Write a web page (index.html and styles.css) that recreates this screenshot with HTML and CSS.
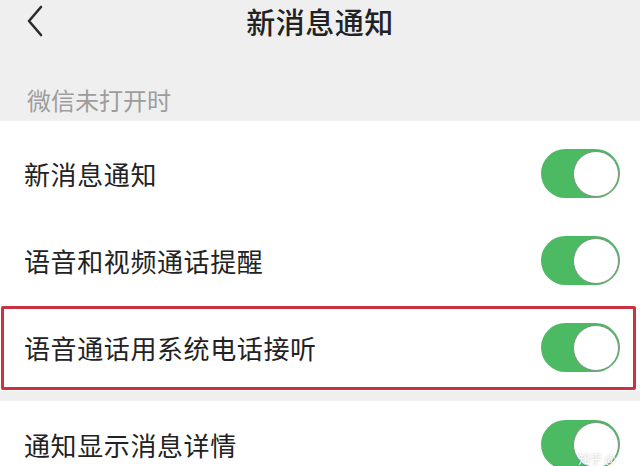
FILE: index.html
```html
<!DOCTYPE html>
<html lang="zh-CN">
  <head>
    <meta charset="UTF-8" />
    <title>新消息通知</title>
    <link rel="stylesheet" href="styles.css">
  </head>
  <body>
    <header class="nav-bar">
      <span class="back">
        <svg width="18" height="32" viewBox="0 0 18 32">
          <path d="M15 2 L3 16 L15 30" fill="none" stroke="#2b2b2b" stroke-width="2.6" stroke-linecap="round" stroke-linejoin="round" />
        </svg>
      </span>
      <h1 class="title">新消息通知</h1>
      <span></span>
    </header>

    <div class="section-label">微信未打开时</div>

    <div class="group first">
      <div class="row">
        <span class="row-text">新消息通知</span>
        <span class="switch"><span class="knob"></span></span>
      </div>
      <div class="row">
        <span class="row-text">语音和视频通话提醒</span>
        <span class="switch"><span class="knob"></span></span>
      </div>
      <div class="row highlighted">
        <span class="row-text">语音通话用系统电话接听</span>
        <span class="switch"><span class="knob"></span></span>
      </div>
    </div>

    <div class="group">
      <div class="row">
        <span class="row-text">通知显示消息详情</span>
        <span class="switch"><span class="knob"></span></span>
      </div>
    </div>

    <!-- faint watermark in the corner -->
    <span class="watermark">知乎 @</span>
  </body>
</html>
```

FILE: styles.css
```css
:root {
  --bg-gray: #efefef;
  --text-dark: #222222;
  --text-muted: #9d9d9d;
  --green: #4cb963;
  --knob-line: #7f9284;
  --mark-red: #c9333f;
}

html,
body {
  margin: 0;
  padding: 0;
}

body {
  width: 640px;
  height: 466px;
  overflow: hidden;
  position: relative;
  background-color: var(--bg-gray);
  font-family: "Noto Sans CJK SC", "Noto Sans", sans-serif;
  color: var(--text-dark);
}

.nav-bar {
  display: grid;
  grid-template-columns: 1fr auto 1fr;
  align-items: center;
  height: 42px;
}

.back {
  display: flex;
  align-items: center;
  padding-left: 26px;
}

.title {
  margin: 0;
  font-size: 29px;
  font-weight: 500;
  line-height: 42px;
  letter-spacing: 0.5px;
}

.section-label {
  padding: 44px 24px 7px 27px;
  font-size: 24px;
  line-height: 28px;
  color: var(--text-muted);
}

.group {
  background-color: #ffffff;
}

.group.first {
  padding-top: 9px;
  margin-bottom: 10px;
}

.row {
  display: flex;
  align-items: center;
  justify-content: space-between;
  height: 87px;
  padding: 0 20px 0 24px;
  position: relative;
}

.row-text {
  font-size: 26px;
  line-height: 36px;
  letter-spacing: 0.6px;
}

/* red frame drawn over the third row */
.highlighted::after {
  content: "";
  position: absolute;
  top: 2px;
  bottom: 1px;
  left: 1px;
  right: 4px;
  border: 3px solid var(--mark-red);
  border-radius: 2px;
  pointer-events: none;
}

.switch {
  display: flex;
  align-items: center;
  justify-content: flex-end;
  width: 79px;
  height: 49px;
  padding: 0 1px;
  box-sizing: border-box;
  border-radius: 25px;
  background-color: var(--green);
}

.knob {
  width: 44px;
  height: 44px;
  border-radius: 50%;
  background-color: #ffffff;
  border: 1.5px solid var(--knob-line);
}

.watermark {
  position: absolute;
  right: 24px;
  bottom: 0;
  font-size: 12px;
  line-height: 14px;
  color: #ffffff;
  text-shadow: 0 0 2px rgba(0, 0, 0, 0.3);
}
```
